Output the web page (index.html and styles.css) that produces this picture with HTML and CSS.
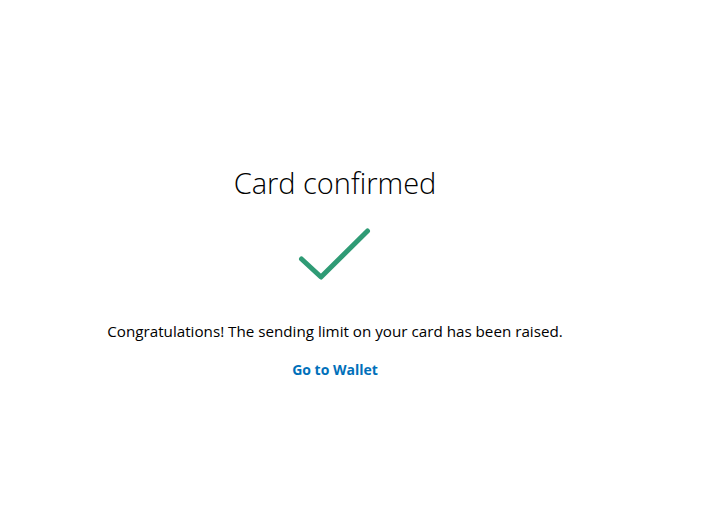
FILE: index.html
```html
<!DOCTYPE html>
<html>
<head>
<meta charset="utf-8">
<link rel="stylesheet" href="styles.css">
</head>
<body>
<main class="page">
  <h1 class="title">Card confirmed</h1>
  <div class="check">
    <svg width="80" height="60" viewBox="0 0 80 60"><polyline points="6.5,33 26,51 72.5,5" fill="none" stroke="#2f9b75" stroke-width="5" stroke-linecap="round" stroke-linejoin="round"/></svg>
  </div>
  <p class="message">Congratulations! The sending limit on your card has been raised.</p>
  <a class="link" href="#">Go to Wallet</a>
</main>
</body>
</html>
```
FILE: styles.css
```css
html, body { margin: 0; padding: 0; background: #fff; }
body { font-family: "Open Sans", "Noto Sans", sans-serif; color: #2c2e2f; }
.page {
  width: 670px;
  padding-top: 163px;
  display: flex;
  flex-direction: column;
  align-items: center;
  text-align: center;
}
.title {
  margin: 0;
  font-size: 29px;
  font-weight: 300;
  line-height: 40px;
  color: #000;
}
.check { margin-top: 23px; height: 60px; }
.check svg { display: block; }
.message {
  margin: 35px 0 0;
  font-size: 15.2px;
  line-height: 20px;
  color: #000;
}
.link {
  margin-top: 19px;
  font-size: 14px;
  font-weight: 700;
  line-height: 20px;
  color: #0070ba;
  text-decoration: none;
}
```
